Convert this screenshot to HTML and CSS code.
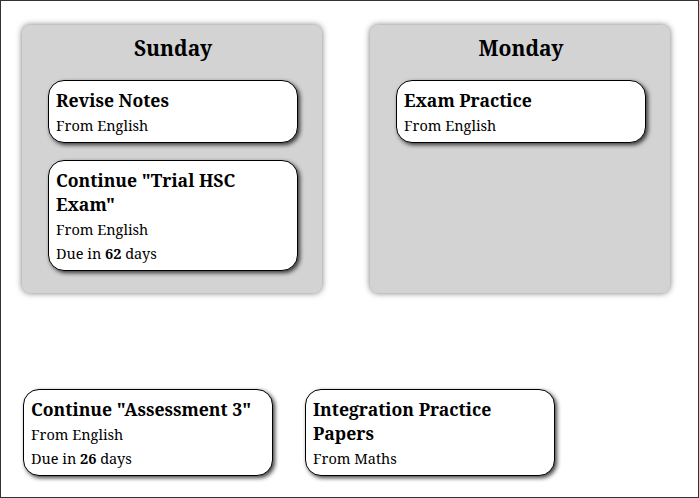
FILE: index.html
```html
<!DOCTYPE html>
<html>
<head>
<meta charset="utf-8">
<link rel="stylesheet" href="styles.css">
</head>
<body>
<div class="frame">
  <div class="days">
    <section class="day">
      <h2 class="day-title">Sunday</h2>
      <div class="card">
        <div class="card-title">Revise Notes</div>
        <div class="card-line">From English</div>
      </div>
      <div class="card">
        <div class="card-title">Continue "Trial HSC Exam"</div>
        <div class="card-line">From English</div>
        <div class="card-line">Due in <b>62</b> days</div>
      </div>
    </section>
    <section class="day">
      <h2 class="day-title">Monday</h2>
      <div class="card">
        <div class="card-title">Exam Practice</div>
        <div class="card-line">From English</div>
      </div>
    </section>
  </div>
  <div class="pool">
    <div class="card">
      <div class="card-title">Continue "Assessment 3"</div>
      <div class="card-line">From English</div>
      <div class="card-line">Due in <b>26</b> days</div>
    </div>
    <div class="card">
      <div class="card-title">Integration Practice Papers</div>
      <div class="card-line">From Maths</div>
    </div>
  </div>
</div>
</body>
</html>
```
FILE: styles.css
```css
html, body {
  margin: 0;
  padding: 0;
  background: #fff;
}
body {
  font-family: "Noto Serif", "DejaVu Serif", serif;
  color: #000;
}
.frame {
  box-sizing: border-box;
  width: 699px;
  height: 498px;
  border: 1px solid #333;
  padding: 24px 21px 0 21px;
}
.days {
  display: flex;
  gap: 48px;
  align-items: flex-start;
}
.day {
  width: 300px;
  box-sizing: border-box;
  min-height: 268px;
  background: #d3d3d3;
  border-radius: 8px;
  box-shadow: 0 0 6px rgba(0,0,0,0.55);
  padding: 8px 24px 21px 26px;
  display: flex;
  flex-direction: column;
  gap: 17px;
}
.day-title {
  margin: 0;
  padding-top: 1px;
  font-size: 21px;
  line-height: 29px;
  font-weight: bold;
  text-align: center;
}
.card {
  width: 250px;
  box-sizing: border-box;
  background: #fff;
  border: 1px solid #000;
  border-radius: 16px;
  box-shadow: 2px 2px 4px rgba(0,0,0,0.75);
  padding: 7px 8px 5px 7px;
}
.card-title {
  font-size: 17.6px;
  line-height: 24px;
  font-weight: bold;
  margin-bottom: 1px;
}
.card-line {
  font-size: 14.5px;
  line-height: 24px;
}
.pool {
  display: flex;
  gap: 32px;
  margin-top: 96px;
  padding-left: 1px;
  align-items: flex-start;
}
```
